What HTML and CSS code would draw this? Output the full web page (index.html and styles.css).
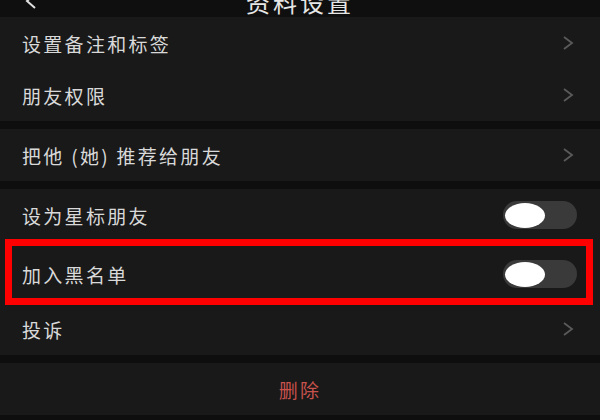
FILE: index.html
```html
<!DOCTYPE html>
<html lang="zh-CN">

<head>
   <meta charset="UTF-8">
   <title>资料设置</title>
   <link rel="stylesheet" href="styles.css">
</head>

<body>
   <div class="page">
      <!-- 顶部标题栏 -->
      <div class="topbar">
         <svg class="back" width="14" height="14" viewBox="0 0 14 14">
            <path d="M11 -6 L3 1 L11 8" fill="none" stroke="#e0e0e0" stroke-width="2"/>
         </svg>
         <div class="title">资料设置</div>
      </div>

      <div class="group">
         <div class="row">
            <span class="label">设置备注和标签</span>
            <svg class="arrow" width="12" height="14" viewBox="0 0 12 14"><path d="M2 1 L10 7 L2 13" fill="none" stroke="#5a5a5a" stroke-width="1.8"/></svg>
         </div>
         <div class="row">
            <span class="label">朋友权限</span>
            <svg class="arrow" width="12" height="14" viewBox="0 0 12 14"><path d="M2 1 L10 7 L2 13" fill="none" stroke="#5a5a5a" stroke-width="1.8"/></svg>
         </div>
      </div>

      <div class="group">
         <div class="row">
            <span class="label">把他 (她) 推荐给朋友</span>
            <svg class="arrow" width="12" height="14" viewBox="0 0 12 14"><path d="M2 1 L10 7 L2 13" fill="none" stroke="#5a5a5a" stroke-width="1.8"/></svg>
         </div>
      </div>

      <div class="group">
         <div class="row">
            <span class="label">设为星标朋友</span>
            <div class="switch"><div class="knob"></div></div>
         </div>
         <!-- 红框标注 -->
         <div class="row row-marked">
            <span class="label">加入黑名单</span>
            <div class="switch"><div class="knob"></div></div>
         </div>
         <div class="row">
            <span class="label">投诉</span>
            <svg class="arrow" width="12" height="14" viewBox="0 0 12 14"><path d="M2 1 L10 7 L2 13" fill="none" stroke="#5a5a5a" stroke-width="1.8"/></svg>
         </div>
      </div>

      <div class="group">
         <div class="row row-delete">删除</div>
      </div>
   </div>
</body>

</html>
```

FILE: styles.css
```css
/* Sayfa genel düzeni */
body {
   margin: 0;
   padding: 0;
   background-color: #0e0e0e;
   font-family: "Noto Sans CJK SC", "Noto Sans", sans-serif;
}

.page {
   width: 600px;
   height: 420px;
   overflow: hidden;
   display: flex;
   flex-direction: column;
   gap: 8px;
}

/* 标题栏 */
.topbar {
   position: relative;
   flex-shrink: 0;
   height: 17px;
   margin-bottom: -8px;
   background-color: #0f0f0f;
   display: flex;
   justify-content: center;
   align-items: flex-end;
   overflow: hidden;
}

.title {
   color: #e6e6e6;
   font-size: 24px;
   line-height: 24px;
   letter-spacing: 3px;
   padding-bottom: 3px;
}

.back {
   position: absolute;
   left: 24px;
   top: 0;
}

/* 列表 */
.group {
   flex-shrink: 0;
   background-color: #191919;
}

.row {
   height: 52px;
   display: flex;
   align-items: center;
   justify-content: space-between;
   padding: 0 26px 0 22px;
   color: #d9d9d9;
   font-size: 19px;
   letter-spacing: 2.3px;
}

.row-marked {
   position: relative;
   height: 62px;
   padding-top: 4px;
   box-sizing: border-box;
}

.row-marked::after {
   content: "";
   position: absolute;
   left: 5px;
   right: 7px;
   top: -2px;
   bottom: -2px;
   border: 7px solid #ff0000;
}

.row-delete {
   justify-content: center;
   color: #c8524c;
   padding: 0;
}

/* 开关 */
.switch {
   width: 74px;
   height: 28px;
   margin-right: -3px;
   border-radius: 14px;
   background-color: #3a3a3a;
   display: flex;
   align-items: center;
   padding-left: 2px;
   box-sizing: border-box;
}

.knob {
   width: 40px;
   height: 25px;
   border-radius: 50%;
   background-color: #ffffff;
}
```
